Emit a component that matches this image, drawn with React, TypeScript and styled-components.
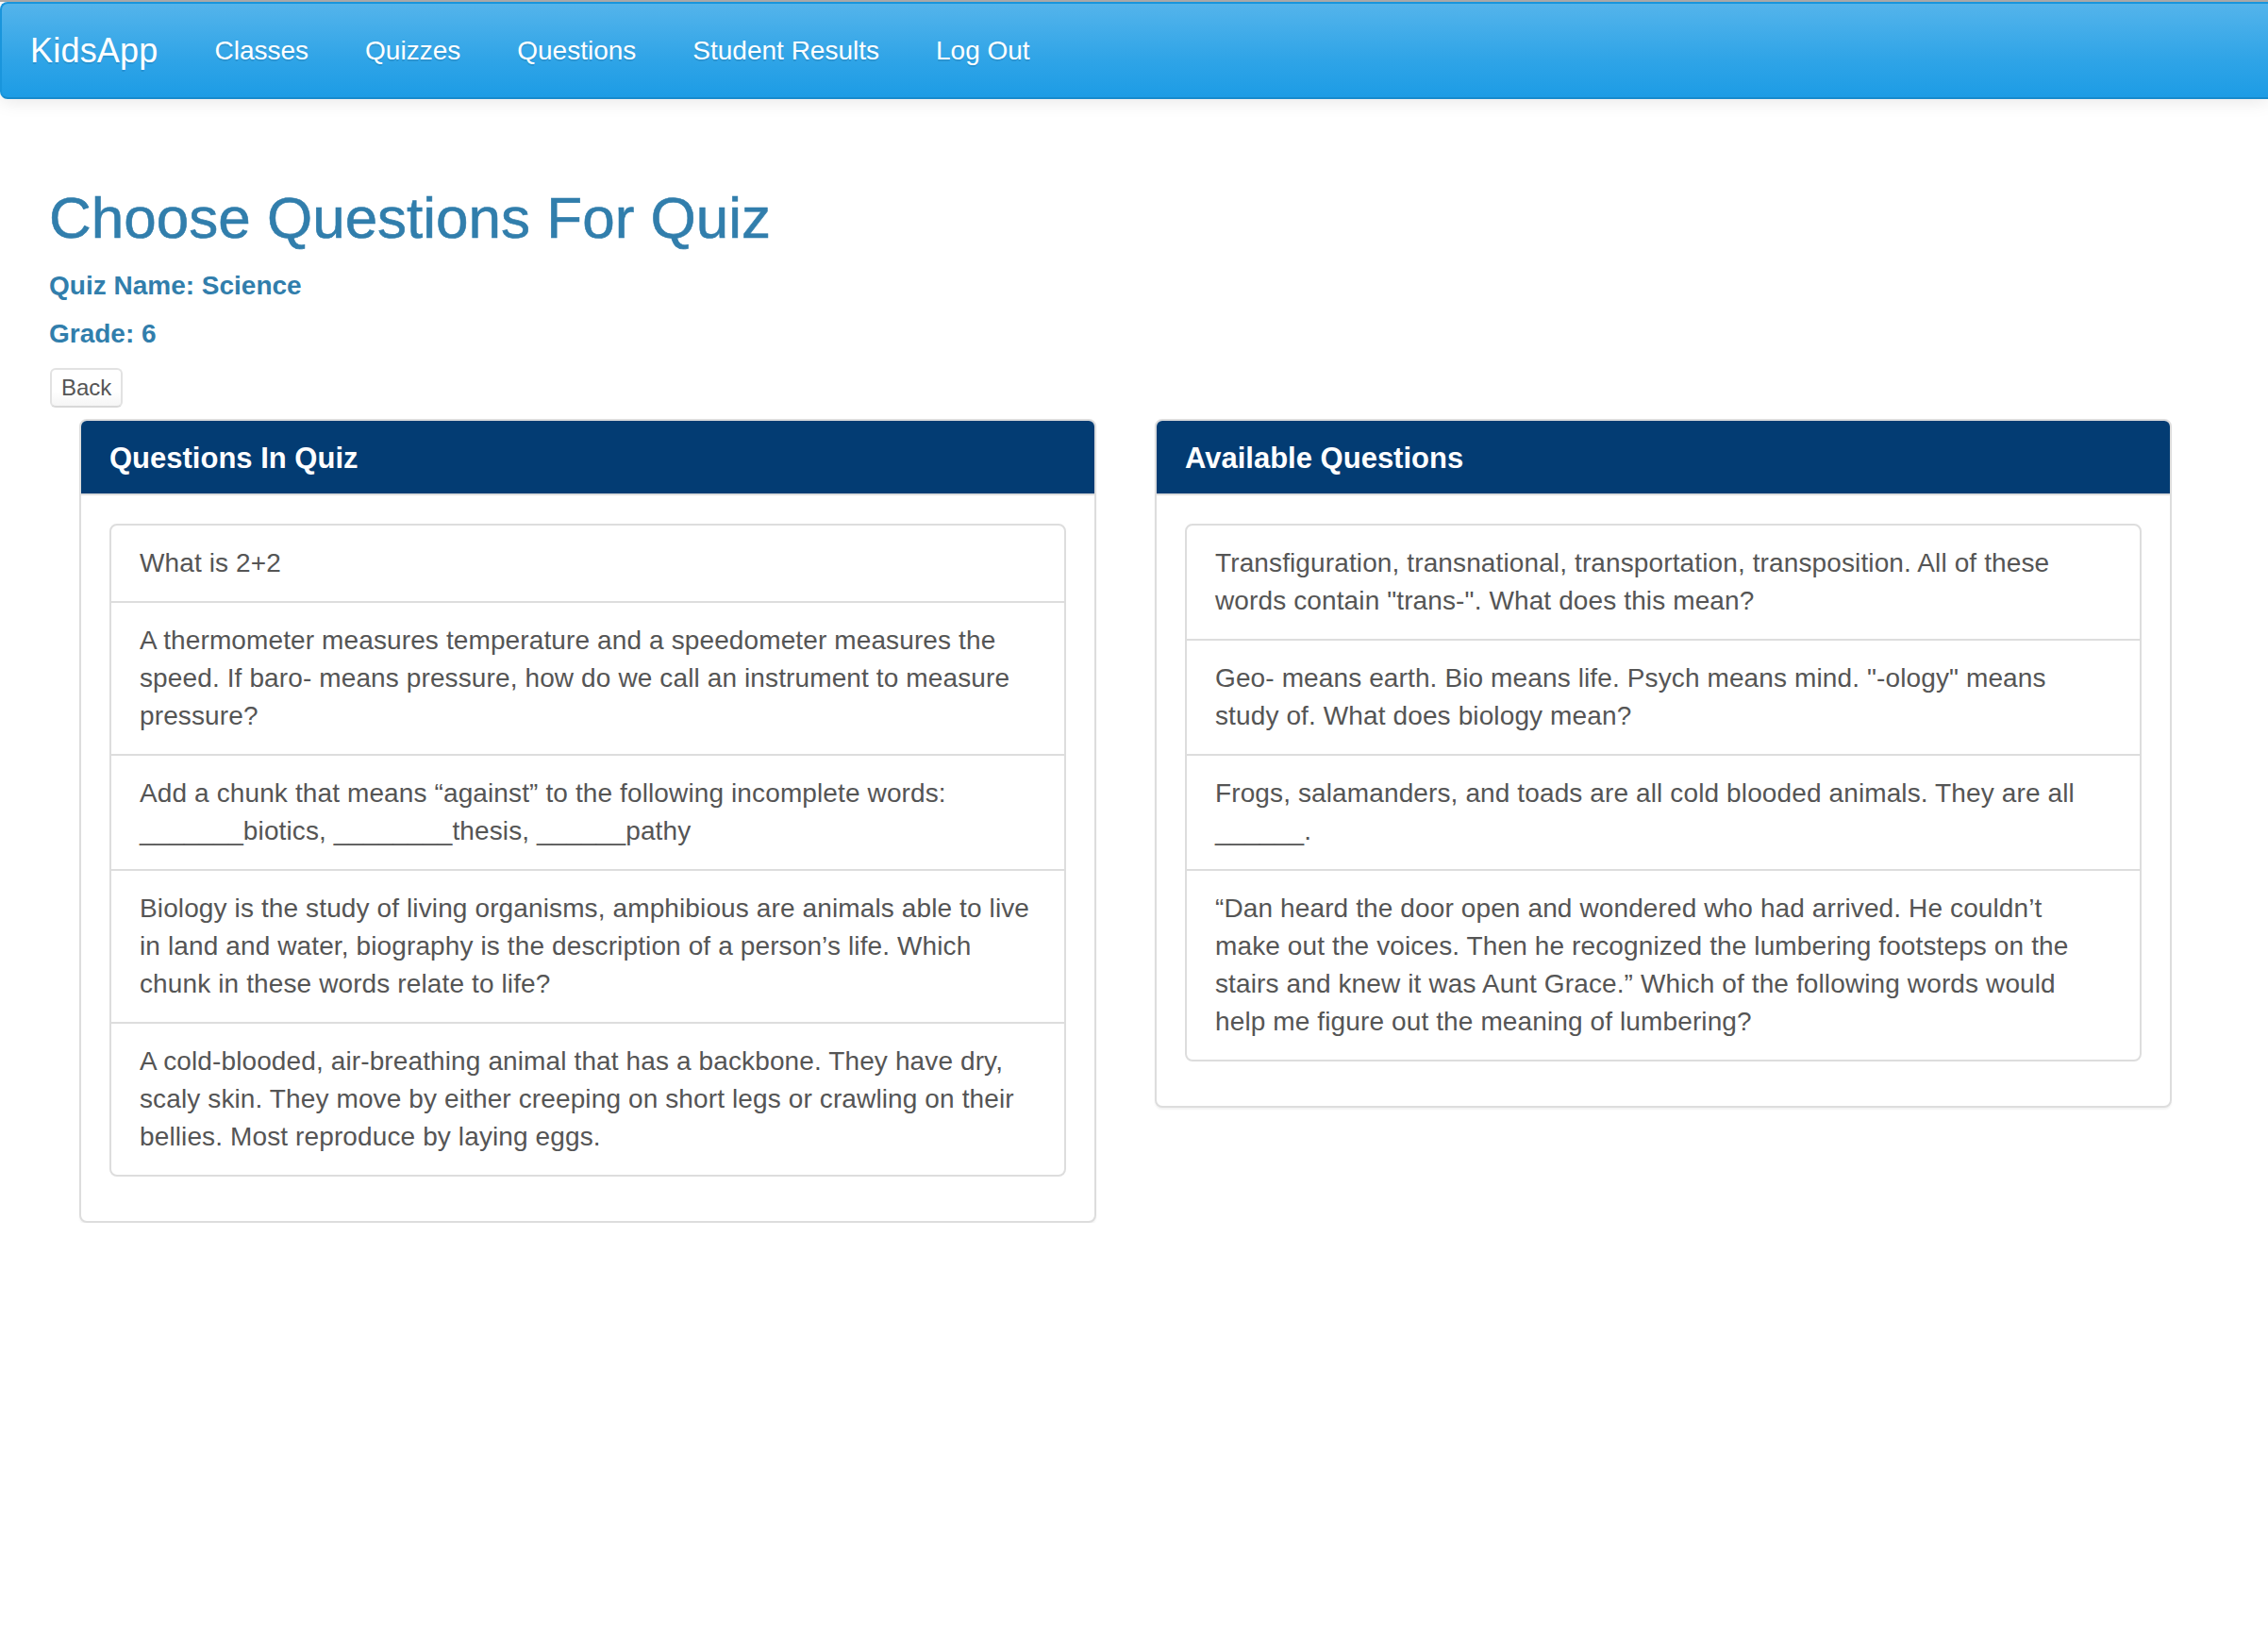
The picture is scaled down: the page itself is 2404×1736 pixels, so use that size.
import React from "react";
import styled, { createGlobalStyle } from "styled-components";

const GlobalStyle = createGlobalStyle`
    html, body {
        margin: 0;
        padding: 0;
        background: #fff;
    }
    body {
        border-top: 2px solid #a8a8a8;
        font-family: "Liberation Sans", Helvetica, Arial, sans-serif;
        color: #555;
        font-size: 28px;
        line-height: 40px;
    }
    * {
        box-sizing: border-box;
    }
`

const Navbar = styled.nav`
    display: flex;
    align-items: center;
    height: 103px;
    background-image: linear-gradient(#54b4eb, #2fa4e7 60%, #1d9ce5);
    border: 2px solid #1995dc;
    border-bottom-color: #178acc;
    border-right: none;
    border-radius: 8px 0 0 8px;
    box-shadow: 0 2px 20px rgba(0, 0, 0, 0.1);
`
const Brand = styled.a`
    padding: 0 30px;
    color: #fff;
    font-size: 36px;
    letter-spacing: 0.2px;
    text-shadow: 0 2px 0 rgba(0, 0, 0, 0.1);
    text-decoration: none;
`
const NavLink = styled.a`
    padding: 0 30px;
    color: #fff;
    font-size: 28px;
    text-shadow: 0 2px 0 rgba(0, 0, 0, 0.1);
    text-decoration: none;
`

const Page = styled.main`
    padding: 40px 52px 0 52px;
`
const Title = styled.h2`
    margin: 52px 0 23px 0;
    color: #317eac;
    font-size: 62px;
    font-weight: 500;
    line-height: 1.1;
    -webkit-text-stroke: 0.6px #317eac;
`
const Meta = styled.h5`
    margin: 20px 0;
    color: #317eac;
    font-size: 28px;
    font-weight: bold;
    line-height: 1.1;
`
const BackButton = styled.button`
    display: inline-block;
    margin: 0 0 0 1px;
    padding: 0 10px;
    height: 42px;
    border: 2px solid #e2e2e2;
    border-bottom-color: #d8d8d8;
    border-radius: 6px;
    background-image: linear-gradient(#fff, #fff 60%, #f5f5f5);
    color: #555;
    font-family: "Liberation Sans", Helvetica, Arial, sans-serif;
    font-size: 24px;
    line-height: 36px;
`
const PanelsRow = styled.div`
    display: flex;
    align-items: flex-start;
    gap: 62px;
    margin: 12px 0 0 0;
    padding: 0 0 0 32px;
`
const Panel = styled.section`
    width: 1078px;
    border: 2px solid #ddd;
    border-radius: 8px;
    background: #fff;
    box-shadow: 0 2px 2px rgba(0, 0, 0, 0.05);
`
const PanelHeading = styled.div`
    display: flex;
    align-items: center;
    height: 79px;
    padding: 4px 30px 0 30px;
    border-bottom: 2px solid #ddd;
    border-radius: 6px 6px 0 0;
    background: #033c73;
    color: #fff;
    font-size: 31px;
    font-weight: bold;
`
const PanelBody = styled.div`
    padding: 30px 30px 47px 30px;
`
const ListGroup = styled.ul`
    margin: 0;
    padding: 0;
    list-style: none;
`
const ListItem = styled.li`
    padding: 20px 30px;
    margin: 0 0 -2px 0;
    border: 2px solid #ddd;
    background: #fff;
    font-size: 28px;
    line-height: 40px;
    letter-spacing: 0.12px;
    &:first-child {
        border-radius: 8px 8px 0 0;
    }
    &:last-child {
        margin-bottom: 0;
        border-radius: 0 0 8px 8px;
    }
`

const quizQuestions = [
    "What is 2+2",
    "A thermometer measures temperature and a speedometer measures the speed. If baro- means pressure, how do we call an instrument to measure pressure?",
    "Add a chunk that means \u201cagainst\u201d to the following incomplete words: _______biotics, ________thesis, ______pathy",
    "Biology is the study of living organisms, amphibious are animals able to live in land and water, biography is the description of a person\u2019s life. Which chunk in these words relate to life?",
    "A cold-blooded, air-breathing animal that has a backbone. They have dry, scaly skin. They move by either creeping on short legs or crawling on their bellies. Most reproduce by laying eggs.",
]

const availableQuestions = [
    "Transfiguration, transnational, transportation, transposition. All of these words contain \"trans-\". What does this mean?",
    "Geo- means earth. Bio means life. Psych means mind. \"-ology\" means study of. What does biology mean?",
    "Frogs, salamanders, and toads are all cold blooded animals. They are all ______.",
    "\u201cDan heard the door open and wondered who had arrived. He couldn\u2019t make out the voices. Then he recognized the lumbering footsteps on the stairs and knew it was Aunt Grace.\u201d Which of the following words would help me figure out the meaning of lumbering?",
]

const QuestionPanel = ({ title, items }: { title: string; items: string[] }) => (
    <Panel>
        <PanelHeading>{title}</PanelHeading>
        <PanelBody>
            <ListGroup>
                {items.map((q, i) => (
                    <ListItem key={i}>{q}</ListItem>
                ))}
            </ListGroup>
        </PanelBody>
    </Panel>
)

export default function App() {
    return (
        <>
            <GlobalStyle />
            <Navbar>
                <Brand>KidsApp</Brand>
                <NavLink>Classes</NavLink>
                <NavLink>Quizzes</NavLink>
                <NavLink>Questions</NavLink>
                <NavLink>Student Results</NavLink>
                <NavLink>Log Out</NavLink>
            </Navbar>
            <Page>
                <Title>Choose Questions For Quiz</Title>
                <Meta>Quiz Name: Science</Meta>
                <Meta>Grade: 6</Meta>
                <BackButton>Back</BackButton>
                <PanelsRow>
                    <QuestionPanel title="Questions In Quiz" items={quizQuestions} />
                    <QuestionPanel title="Available Questions" items={availableQuestions} />
                </PanelsRow>
            </Page>
        </>
    );
}
